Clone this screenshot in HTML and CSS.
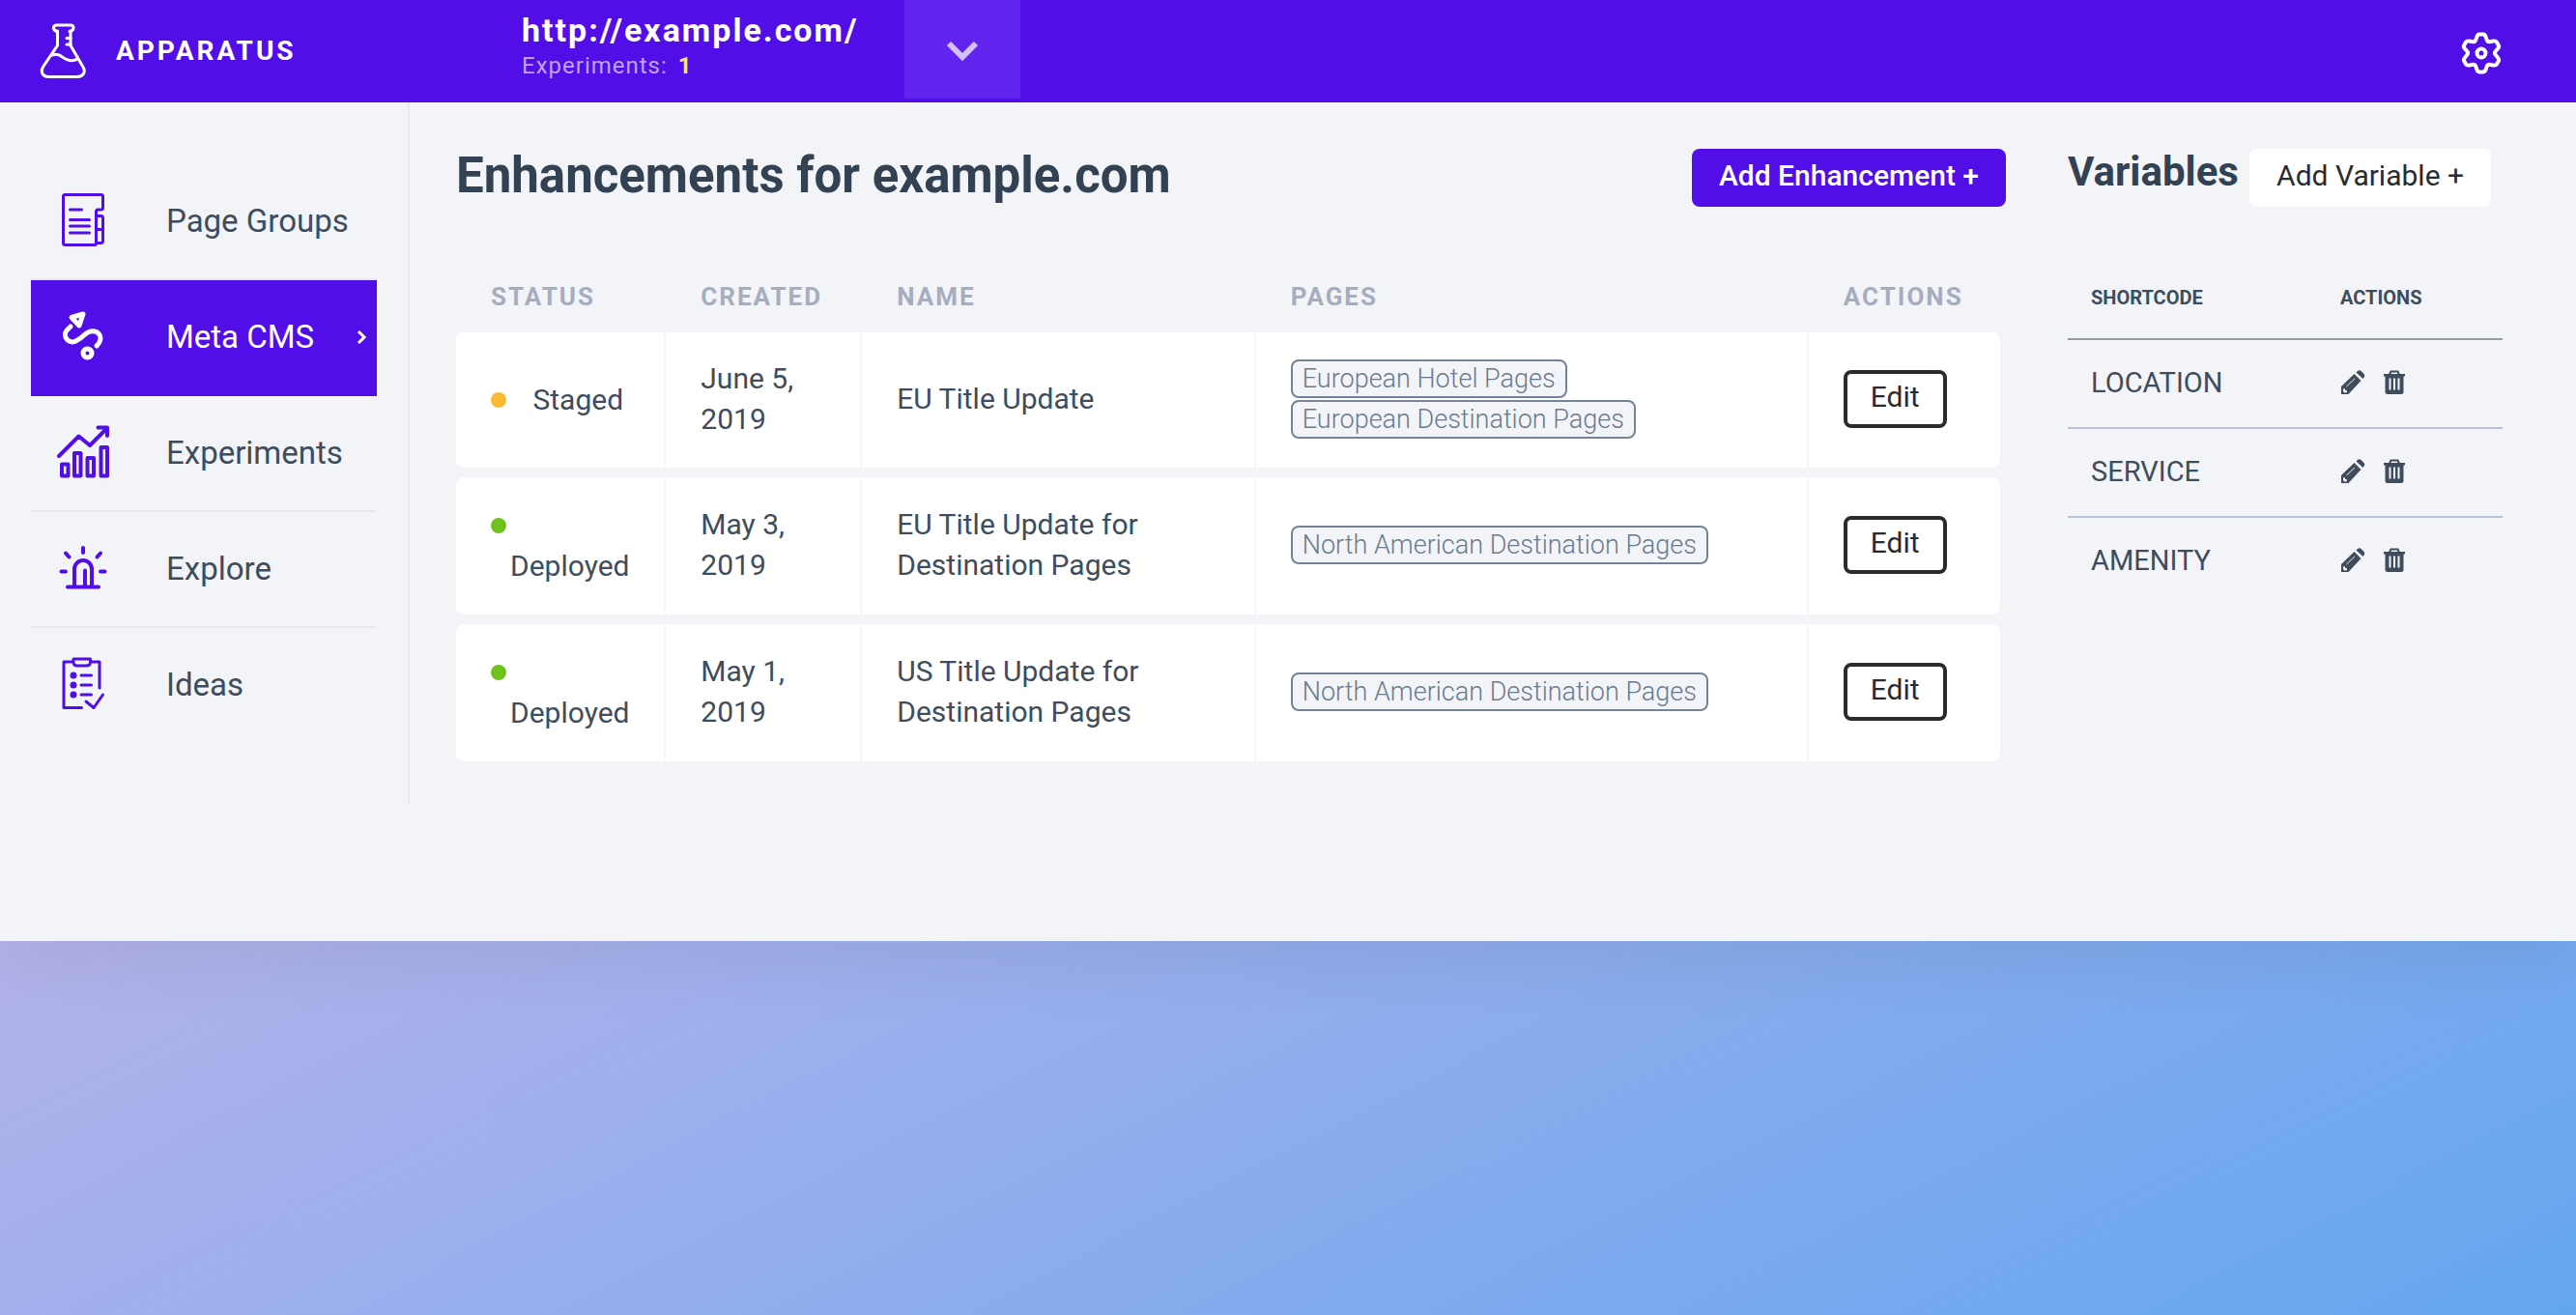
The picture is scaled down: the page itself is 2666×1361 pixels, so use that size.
FILE: index.html
```html
<!DOCTYPE html>
<html lang="en">
<head>
<meta charset="utf-8">
<meta name="viewport" content="width=device-width, initial-scale=1">
<title>Apparatus – Meta CMS</title>
<link rel="stylesheet" href="styles.css">
</head>
<body>
<svg class="sprite" aria-hidden="true">
  <symbol id="pencil" viewBox="0 0 26 26">
    <path d="M1 17 14.500 4 21.500 11 8.500 25H1z"/>
    <path d="M16.500 2.500 18 1q2-1.500 4 .5l2.500 2.500q1.500 2 0 3.500L23.500 9z"/>
    <path class="cut" d="M3 19.500 5 19v2h2l-.5 2.500H4.500L3 22z"/>
    <path class="shine" d="M6.500 17 15 8.800"/>
  </symbol>
  <symbol id="trash" viewBox="0 0 24 26">
    <path d="M1 4h22v2.500H1z"/>
    <path class="handle" d="M7 4.500 8.500 1.500h7L17 4.500"/>
    <path d="M2.500 6h19v16.500a2.500 2.500 0 0 1-2.500 2.500H5a2.500 2.500 0 0 1-2.500-2.500z"/>
    <path class="cut" d="M6.500 8.500h2v12h-2zM11 8.500h2v12h-2zM15.500 8.500h2v12h-2z"/>
  </symbol>
</svg>

<div class="app">
  <header class="topbar">
    <a class="brand" href="#">
      <svg class="brand-logo" viewBox="40 24 50 60" aria-hidden="true">
        <path d="M59.500 33.500C54 32.500 54.500 27 58.500 27H73c4 0 4.500 5.500-1 6.500"/>
        <path d="M59.500 33V48L45 69.500c-4 6-.5 11 5 11H80c6 0 9.500-5 5.500-11L73 48V33"/>
        <path d="M54 58c9-3 11 5 18 5.500 4 .5 6 0 8-1.500M69 40.500h4M69 47h4"/>
      </svg>
      <span class="brand-name">APPARATUS</span>
    </a>
    <div class="site">
      <div class="site-url">http://example.com/</div>
      <div class="site-meta">Experiments: <b>1</b></div>
    </div>
    <button class="site-toggle" type="button" aria-label="Choose site">
      <svg width="36" height="26" viewBox="0 0 36 26" aria-hidden="true"><path d="M4 4 18 18 32 4"/></svg>
    </button>
    <button class="settings" type="button" aria-label="Settings">
      <svg width="48" height="48" viewBox="-24 -24 48 48" aria-hidden="true">
        <defs><path id="tooth" d="M-7-12.100C-4.400-13.600-5.500-19.500-2-19.500H2C5.500-19.500 4.400-13.600 7-12.100"/></defs>
        <use href="#tooth"/><use href="#tooth" transform="rotate(60)"/><use href="#tooth" transform="rotate(120)"/>
        <use href="#tooth" transform="rotate(180)"/><use href="#tooth" transform="rotate(240)"/><use href="#tooth" transform="rotate(300)"/>
        <circle r="4.500"/>
      </svg>
    </button>
  </header>

  <div class="layout">
    <nav class="sidebar">
      <a class="nav-item" href="#">
        <svg class="nav-icon thin" viewBox="58 200 56 60" aria-hidden="true"><path d="M99.500 253q0 1.500-1.500 1.500H67.500q-2 0-2-2V204.500q0-2 2-2H104.500q2 0 2 2V216q0 2-2 2H101.500q-2 0-2 2zM99.500 224.500H104.500q2 0 2 2V250.500q0 2-2 2H99.500M99.500 238.500h7M72.500 218h12M72.500 228.500h20M72.500 235h20M72.500 242h20"/></svg>
        <span>Page Groups</span>
      </a>
      <a class="nav-item active" href="#">
        <svg class="nav-icon" viewBox="58 320 56 60" aria-hidden="true"><path d="M74 329.500 86 326 82 338zM73 339 69 343C66.500 346 67 350 70 353 75 357 79 354 84 350.500 90 345 94 342 100 344.500 105 348 105.500 353 100 359"/><circle cx="90.500" cy="366.500" r="4.500"/></svg>
        <span>Meta CMS</span>
        <svg class="nav-arrow" width="12" height="16" viewBox="0 0 12 16" aria-hidden="true"><path d="M3 2 9 8 3 14"/></svg>
      </a>
      <a class="nav-item" href="#">
        <svg class="nav-icon" viewBox="58 440 56 60" aria-hidden="true"><path d="M61 473 81.500 452.500 93 462 109 446M101.500 443.500H111V452M64 481.500h6.500v12H64zM77 470h6.500v23.500H77zM90.500 475H97v18.500H90.500zM104.500 464h6.500v29.500h-6.500z"/></svg>
        <span>Experiments</span>
      </a>
      <a class="nav-item" href="#">
        <svg class="nav-icon" viewBox="58 560 56 60" aria-hidden="true"><path d="M70 608.500h32M77 608V590a9 9 0 0 1 18 0V608M88 608V591.500M86 568v5M68 573.500l3.500 4M104 573.500l-3.500 4M63.500 592.500h4.500M104 592.500h4.500"/></svg>
        <span>Explore</span>
      </a>
      <a class="nav-item" href="#">
        <svg class="nav-icon thin" viewBox="58 680 56 60" aria-hidden="true"><path d="M76 686H66V733.500H84.500M94 686H103V713M76 683H93.500V686q0 4-4 4H80q-4 0-4-4zM84 700H94.500M84 710H94.500M84 720H94.500M89 727 97 733.500 106.500 720"/><path class="dots" d="M76 700h.01M76 710h.01M76 720h.01"/></svg>
        <span>Ideas</span>
      </a>
    </nav>

    <main class="content">
      <section class="enhancements">
        <div class="section-head">
          <h1>Enhancements for example.com</h1>
          <button class="btn primary" type="button">Add Enhancement +</button>
        </div>
        <table class="cards">
          <colgroup><col class="c-status"><col class="c-created"><col class="c-name"><col class="c-pages"><col class="c-actions"></colgroup>
          <thead><tr><th>STATUS</th><th>CREATED</th><th>NAME</th><th>PAGES</th><th>ACTIONS</th></tr></thead>
          <tbody>
            <tr>
              <td class="status"><i class="dot staged"></i> <span>Staged</span></td>
              <td>June 5, 2019</td>
              <td>EU Title Update</td>
              <td><div class="tags"><span class="tag">European Hotel Pages</span><span class="tag">European Destination Pages</span></div></td>
              <td><button class="btn outline" type="button">Edit</button></td>
            </tr>
            <tr>
              <td class="status"><i class="dot deployed"></i> <span>Deployed</span></td>
              <td>May 3, 2019</td>
              <td>EU Title Update for Destination Pages</td>
              <td><div class="tags"><span class="tag">North American Destination Pages</span></div></td>
              <td><button class="btn outline" type="button">Edit</button></td>
            </tr>
            <tr>
              <td class="status"><i class="dot deployed"></i> <span>Deployed</span></td>
              <td>May 1, 2019</td>
              <td>US Title Update for Destination Pages</td>
              <td><div class="tags"><span class="tag">North American Destination Pages</span></div></td>
              <td><button class="btn outline" type="button">Edit</button></td>
            </tr>
          </tbody>
        </table>
      </section>

      <aside class="variables">
        <div class="section-head">
          <h2>Variables</h2>
          <button class="btn light" type="button">Add Variable +</button>
        </div>
        <table class="list">
          <thead><tr><th>SHORTCODE</th><th>ACTIONS</th></tr></thead>
          <tbody>
            <tr><td>LOCATION</td><td><div class="tools"><button type="button" aria-label="Edit LOCATION"><svg width="26" height="26"><use href="#pencil"/></svg></button><button type="button" aria-label="Delete LOCATION"><svg width="24" height="26"><use href="#trash"/></svg></button></div></td></tr>
            <tr><td>SERVICE</td><td><div class="tools"><button type="button" aria-label="Edit SERVICE"><svg width="26" height="26"><use href="#pencil"/></svg></button><button type="button" aria-label="Delete SERVICE"><svg width="24" height="26"><use href="#trash"/></svg></button></div></td></tr>
            <tr><td>AMENITY</td><td><div class="tools"><button type="button" aria-label="Edit AMENITY"><svg width="26" height="26"><use href="#pencil"/></svg></button><button type="button" aria-label="Delete AMENITY"><svg width="24" height="26"><use href="#trash"/></svg></button></div></td></tr>
          </tbody>
        </table>
      </aside>
    </main>
  </div>
</div>
</body>
</html>
```
FILE: styles.css
```css
:root {
  --purple: #520ee6;
  --panel: #f2f4f8;
  --text: #3f4c5c;
  --heading: #324253;
  --rule: #e7e9ed;
}

* { box-sizing: border-box; }

body {
  margin: 0;
  min-height: 100vh;
  background: linear-gradient(to bottom right, #e1bae8, #a2b0ec 50%, #63a6f0);
  color: var(--text);
  font: 400 30px/42px Roboto, "Liberation Sans", sans-serif;
}

a { color: inherit; text-decoration: none; }

button {
  margin: 0;
  padding: 0;
  border: 0;
  background: none;
  color: inherit;
  font: inherit;
  cursor: pointer;
}

svg { display: block; }
.sprite { display: none; }

.app {
  padding-bottom: 142px;
  background: var(--panel);
  box-shadow: 0 30px 60px rgba(0, 0, 0, 0.06);
}

/* Top bar */
.topbar {
  display: flex;
  height: 106px;
  background: var(--purple);
  color: #fff;
}

.brand {
  display: flex;
  align-items: center;
  gap: 30px;
  width: 540px;
  padding-left: 40px;
}

.brand-logo {
  width: 50px;
  height: 60px;
  fill: none;
  stroke: currentColor;
  stroke-width: 3;
  stroke-linecap: round;
}

.brand-name {
  font-size: 28px;
  font-weight: 700;
  letter-spacing: 3px;
}

.site {
  width: 396px;
  padding-top: 10px;
}

.site-url {
  font-size: 34px;
  font-weight: 700;
  letter-spacing: 2px;
}

.site-meta {
  color: #bda4f7;
  font-size: 24px;
  line-height: 32px;
  letter-spacing: 1px;
}

.site-meta b { margin-left: 4px; color: #fde07a; }

.site-toggle {
  display: grid;
  place-items: center;
  width: 120px;
  height: 102px;
  padding-top: 6px;
  background: #6024ee;
}

.site-toggle svg, .settings svg {
  fill: none;
  stroke: #fff;
  stroke-width: 4;
  stroke-linecap: round;
}

.site-toggle svg { stroke: #d3c1fc; stroke-width: 6; stroke-linecap: butt; }

.settings {
  margin-left: auto;
  padding: 4px 74px 0 0;
}

/* Sidebar */
.layout { display: flex; align-items: flex-start; }

.sidebar {
  flex: none;
  width: 424px;
  padding: 64px 32px 62px;
  border-right: 2px solid var(--rule);
}

.nav-item {
  display: flex;
  align-items: center;
  height: 120px;
  padding: 0 10px 0 26px;
  border-bottom: 2px solid var(--rule);
  font-size: 33px;
  white-space: nowrap;
}

.nav-item:last-child { border-bottom-color: transparent; }

.nav-item.active {
  border-color: var(--purple);
  background: var(--purple);
  color: #fff;
}

.nav-icon {
  flex: none;
  width: 56px;
  height: 60px;
  margin-right: 58px;
  fill: none;
  stroke: var(--purple);
  stroke-width: 4;
  stroke-linecap: round;
  stroke-linejoin: round;
}

.nav-icon.thin { stroke-width: 3; }
.nav-icon .dots { stroke-width: 7; }
.active .nav-icon { stroke: #fff; stroke-width: 5; }

.nav-arrow {
  flex: none;
  margin-left: auto;
  fill: none;
  stroke: #fff;
  stroke-width: 3;
}

/* Content */
.content {
  display: grid;
  grid-template-columns: minmax(0, 1fr) 450px;
  gap: 64px;
  flex: 1;
  padding: 48px 76px 0 48px;
}

.section-head {
  display: flex;
  align-items: flex-start;
  justify-content: space-between;
  margin-bottom: 66px;
}

h1, h2 { margin: 0; color: var(--heading); font-weight: 700; }
h1 { font-size: 51px; line-height: 56px; }
h2 { font-size: 42px; line-height: 48px; }

.btn {
  height: 60px;
  padding: 0 28px 4px;
  border-radius: 8px;
  white-space: nowrap;
}

.btn.primary { background: var(--purple); color: #fff; font-weight: 500; }
.btn.light { background: #fff; color: #2a2b2d; }

.btn.outline {
  padding: 0 24px 4px;
  border: 4px solid #2a2b2d;
  color: #2a2b2d;
  vertical-align: middle;
}

.variables .section-head { padding-right: 12px; }

.cards {
  width: calc(100% - 6px);
  border-collapse: separate;
  border-spacing: 0 10px;
  table-layout: fixed;
  margin: -10px 0;
}

.c-status { width: 13.6%; }
.c-created { width: 12.7%; }
.c-name { width: 25.5%; }
.c-pages { width: 35.8%; }
.c-actions { width: 12.4%; }

.cards th {
  height: 54px;
  padding: 0 0 0 36px;
  color: #a5adbf;
  font-size: 26px;
  font-weight: 700;
  letter-spacing: 2px;
  text-align: left;
}

.cards td {
  height: 140px;
  padding: 27px 34px 29px 36px;
  border-right: 2px solid #f5f6f9;
  background: #fff;
}

.cards td:first-child { border-radius: 8px 0 0 8px; }
.cards td:last-child { border-right: 0; border-radius: 0 8px 8px 0; }
.cards td.status { padding: 29px 28px 29px 36px; }

.dot {
  display: inline-block;
  width: 16px;
  height: 16px;
  border-radius: 50%;
  vertical-align: 2px;
}

.staged { background: #fabb33; }
.deployed { background: #6fc11c; }
.status span { display: inline-block; margin-left: 20px; }

.tags {
  display: flex;
  flex-direction: column;
  align-items: flex-start;
  gap: 2px;
}

.tag {
  padding: 0 10px;
  border: 2px solid #738496;
  border-radius: 8px;
  background: var(--panel);
  color: #6a7b8d;
  font-size: 27px;
  font-weight: 300;
  line-height: 36px;
}

/* Variables */
.list { width: 100%; border-collapse: collapse; }

.list th {
  height: 71px;
  padding: 0 24px 14px;
  border-bottom: 2px solid #959b9c;
  font-size: 20px;
  font-weight: 700;
  text-align: left;
}

.list td {
  height: 92px;
  padding: 0 24px 2px;
  border-bottom: 2px solid #b9c1d6;
  font-size: 29px;
}

.list th:first-child { width: 258px; }
.list tr:last-child td { border-bottom-color: transparent; }

.tools { display: flex; gap: 18px; }
.tools svg { fill: var(--text); }
.cut { fill: var(--panel); }
.shine { fill: none; stroke: var(--panel); stroke-width: 1; }
.handle { fill: none; stroke: var(--text); stroke-width: 2; }
```
